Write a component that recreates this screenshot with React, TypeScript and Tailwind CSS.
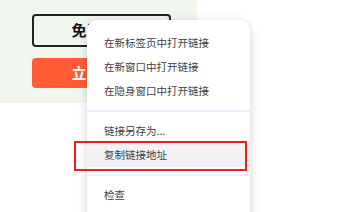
import React from 'react';

const groups: string[][] = [
  ['在新标签页中打开链接', '在新窗口中打开链接', '在隐身窗口中打开链接'],
  ['链接另存为...', '复制链接地址'],
  ['检查'],
];

const App: React.FC = () => (
  <div
    className="relative w-[343px] h-[212px] overflow-hidden bg-white"
    style={{ fontFamily: '"Noto Sans CJK SC", "Noto Sans", sans-serif' }}
  >
    <div className="w-[197px] h-[103px] bg-[#f1f7ef] pt-[14px] pl-[32px] flex flex-col gap-[11px]">
      <button className="w-[139px] h-[33px] border-2 border-[#222] rounded-[4px] text-[15px] font-bold text-[#111] bg-transparent">
        免费试用
      </button>
      <button className="w-[139px] h-[30px] rounded-[4px] bg-[#ff5c35] text-[15px] font-bold text-white">
        立即购买
      </button>
    </div>

    <div className="absolute left-[87px] top-[20px] w-[163px] h-[210px] bg-white rounded-[10px] shadow-[0_2px_10px_rgba(0,0,0,0.18)] pt-[11px]">
      {groups.map((group, gi) => (
        <div key={gi}>
          {gi > 0 && (
            <div className="h-[16px] flex items-center">
              <div className="w-full h-[2px] bg-[#e8f0fe]" />
            </div>
          )}
          {group.map((item) => (
            <div
              key={item}
              className={`h-[24px] flex items-center pl-[17px] text-[10.5px] text-[#3c4043] ${
                item === '复制链接地址' ? 'bg-[#f2f2f2]' : ''
              }`}
            >
              {item}
            </div>
          ))}
        </div>
      ))}
    </div>

    <div className="absolute left-[74px] top-[141px] w-[173px] h-[30px] border-2 border-[#f21c1c]" />
  </div>
);

export default App;
